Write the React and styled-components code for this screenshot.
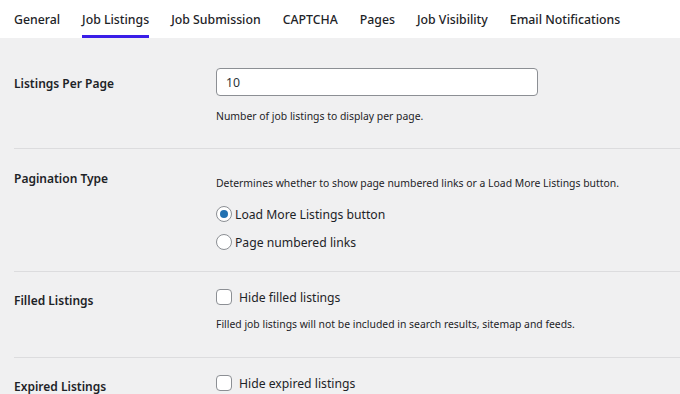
import styled, { createGlobalStyle } from "styled-components";

const GlobalStyle = createGlobalStyle`
  html, body {
    margin: 0;
    padding: 0;
    background: #f0f0f1;
    font-family: "Noto Sans", "Open Sans", sans-serif;
    color: #1d2327;
  }
`;

const Page = styled.div`
  width: 680px;
  height: 394px;
  overflow: hidden;
  background: #f0f0f1;
`;

const TabBar = styled.nav`
  display: flex;
  align-items: stretch;
  gap: 22px;
  height: 38px;
  padding-left: 14px;
  background: #ffffff;
`;

const TabItem = styled.a`
  display: flex;
  align-items: center;
  font-size: 12.3px;
  font-weight: 500;
  color: #1d2327;
  text-decoration: none;
  border-bottom: 3px solid ${(p) => (p.$active ? "#3a1ee8" : "transparent")};
  padding-top: 3px;
  box-sizing: border-box;
  white-space: nowrap;
`;

const Form = styled.div`
  padding-left: 14px;
`;

const Row = styled.div`
  display: grid;
  grid-template-columns: 202px 1fr;
  padding: ${(p) => p.$pt}px 0 ${(p) => p.$pb}px;
  border-bottom: 1px solid #dcdcde;
`;

const Label = styled.div`
  font-size: 12px;
  font-weight: 600;
  line-height: 20px;
  padding-top: ${(p) => p.$pt || 0}px;
`;

const Field = styled.div`
  display: flex;
  flex-direction: column;
  align-items: flex-start;
  padding-top: ${(p) => p.$pt || 0}px;
`;

const TextInput = styled.input`
  width: 322px;
  height: 28px;
  box-sizing: border-box;
  border: 1px solid #8c8f94;
  border-radius: 4px;
  background: #fff;
  padding: 0 9px;
  font-family: inherit;
  font-size: 12.3px;
  color: #2c3338;
  outline: none;
`;

const Description = styled.p`
  margin: ${(p) => p.$mt || 0}px 0 ${(p) => p.$mb || 0}px;
  font-size: 10.4px;
  line-height: 18px;
  color: #1d2327;
`;

const Choice = styled.label`
  display: flex;
  align-items: center;
  gap: ${(p) => p.$gap || 3}px;
  height: ${(p) => p.$h || 28}px;
  font-size: 12.2px;
  color: #1d2327;
`;

const RadioDot = styled.span`
  width: 16px;
  height: 16px;
  box-sizing: border-box;
  border-radius: 50%;
  border: 1px solid #8c8f94;
  background: #fff;
  display: flex;
  align-items: center;
  justify-content: center;
  &::after {
    content: "";
    width: 8px;
    height: 8px;
    border-radius: 50%;
    background: ${(p) => (p.$checked ? "#2271b1" : "transparent")};
  }
`;

const CheckBox = styled.span`
  width: 16px;
  height: 16px;
  box-sizing: border-box;
  border-radius: 4px;
  border: 1px solid #8c8f94;
  background: #fff;
`;

const tabs = [
  "General",
  "Job Listings",
  "Job Submission",
  "CAPTCHA",
  "Pages",
  "Job Visibility",
  "Email Notifications",
];

export default function App() {
  return (
    <Page>
      <GlobalStyle />
      <TabBar>
        {tabs.map((t) => (
          <TabItem key={t} $active={t === "Job Listings"}>
            {t}
          </TabItem>
        ))}
      </TabBar>
      <Form>
        <Row $pt={30} $pb={23}>
          <Label $pt={6}>Listings Per Page</Label>
          <Field>
            <TextInput defaultValue="10" />
            <Description $mt={11}>Number of job listings to display per page.</Description>
          </Field>
        </Row>
        <Row $pt={20} $pb={15}>
          <Label>Pagination Type</Label>
          <Field $pt={5}>
            <Description $mb={8}>
              Determines whether to show page numbered links or a Load More Listings button.
            </Description>
            <Choice>
              <RadioDot $checked />
              Load More Listings button
            </Choice>
            <Choice>
              <RadioDot />
              Page numbered links
            </Choice>
          </Field>
        </Row>
        <Row $pt={17} $pb={24}>
          <Label $pt={2}>Filled Listings</Label>
          <Field>
            <Choice $h={16} $gap={7}>
              <CheckBox />
              Hide filled listings
            </Choice>
            <Description $mt={10}>
              Filled job listings will not be included in search results, sitemap and feeds.
            </Description>
          </Field>
        </Row>
        <Row $pt={17} $pb={24}>
          <Label $pt={2}>Expired Listings</Label>
          <Field>
            <Choice $h={16} $gap={7}>
              <CheckBox />
              Hide expired listings
            </Choice>
          </Field>
        </Row>
      </Form>
    </Page>
  );
}
